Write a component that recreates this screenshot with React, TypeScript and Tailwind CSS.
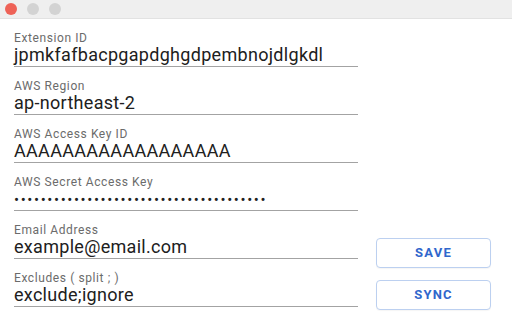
import React from 'react';

const FIELDS = [
  { label: 'Extension ID', value: 'jpmkfafbacpgapdghgdpembnojdlgkdl' },
  { label: 'AWS Region', value: 'ap-northeast-2' },
  { label: 'AWS Access Key ID', value: 'AAAAAAAAAAAAAAAAAA' },
  { label: 'AWS Secret Access Key', value: '•'.repeat(38), secret: true },
  { label: 'Email Address', value: 'example@email.com' },
  { label: 'Excludes ( split ; )', value: 'exclude;ignore' },
];

function Field({ label, value, secret }: { label: string; value: string; secret?: boolean }) {
  return (
    <div className="h-[48px] pt-[13px] border-b border-[#a3a3a3]">
      <div className="text-[12px] leading-[13px] text-[#6b6b6b] tracking-[0.6px]">{label}</div>
      <div
        className={`leading-[20px] text-[#202020] whitespace-nowrap ${
          secret ? 'text-[15px] tracking-[1.6px] mt-[1px]' : 'text-[18px] tracking-[0.3px]'
        }`}
      >
        {value}
      </div>
    </div>
  );
}

function OutlineButton({ children }: { children: React.ReactNode }) {
  return (
    <button className="h-[30px] w-full rounded-[4px] border border-[#bcd0f0] bg-white text-[13px] font-bold tracking-[1.2px] text-[#3067cc] shadow-[0_1px_1px_rgba(0,0,0,0.04)]">
      {children}
    </button>
  );
}

export default function App() {
  return (
    <div className="w-[512px] h-[320px] bg-white overflow-hidden font-['Roboto','Liberation_Sans',sans-serif]">
      <div className="h-[19px] bg-[#efefef] border-b border-[#e2e2e2] flex items-center pl-[5px] gap-[10px]">
        <span className="w-[12px] h-[12px] rounded-full bg-[#ee6257]" />
        <span className="w-[12px] h-[12px] rounded-full bg-[#d3d3d3]" />
        <span className="w-[12px] h-[12px] rounded-full bg-[#d3d3d3]" />
      </div>
      <div className="flex h-[301px]">
        <div className="ml-[14px] w-[344px] flex flex-col">
          {FIELDS.map((f) => (
            <Field key={f.label} label={f.label} value={f.value} secret={f.secret} />
          ))}
        </div>
        <div className="ml-[18px] w-[115px] flex flex-col justify-end gap-[12px] pb-[10px]">
          <OutlineButton>SAVE</OutlineButton>
          <OutlineButton>SYNC</OutlineButton>
        </div>
      </div>
    </div>
  );
}
